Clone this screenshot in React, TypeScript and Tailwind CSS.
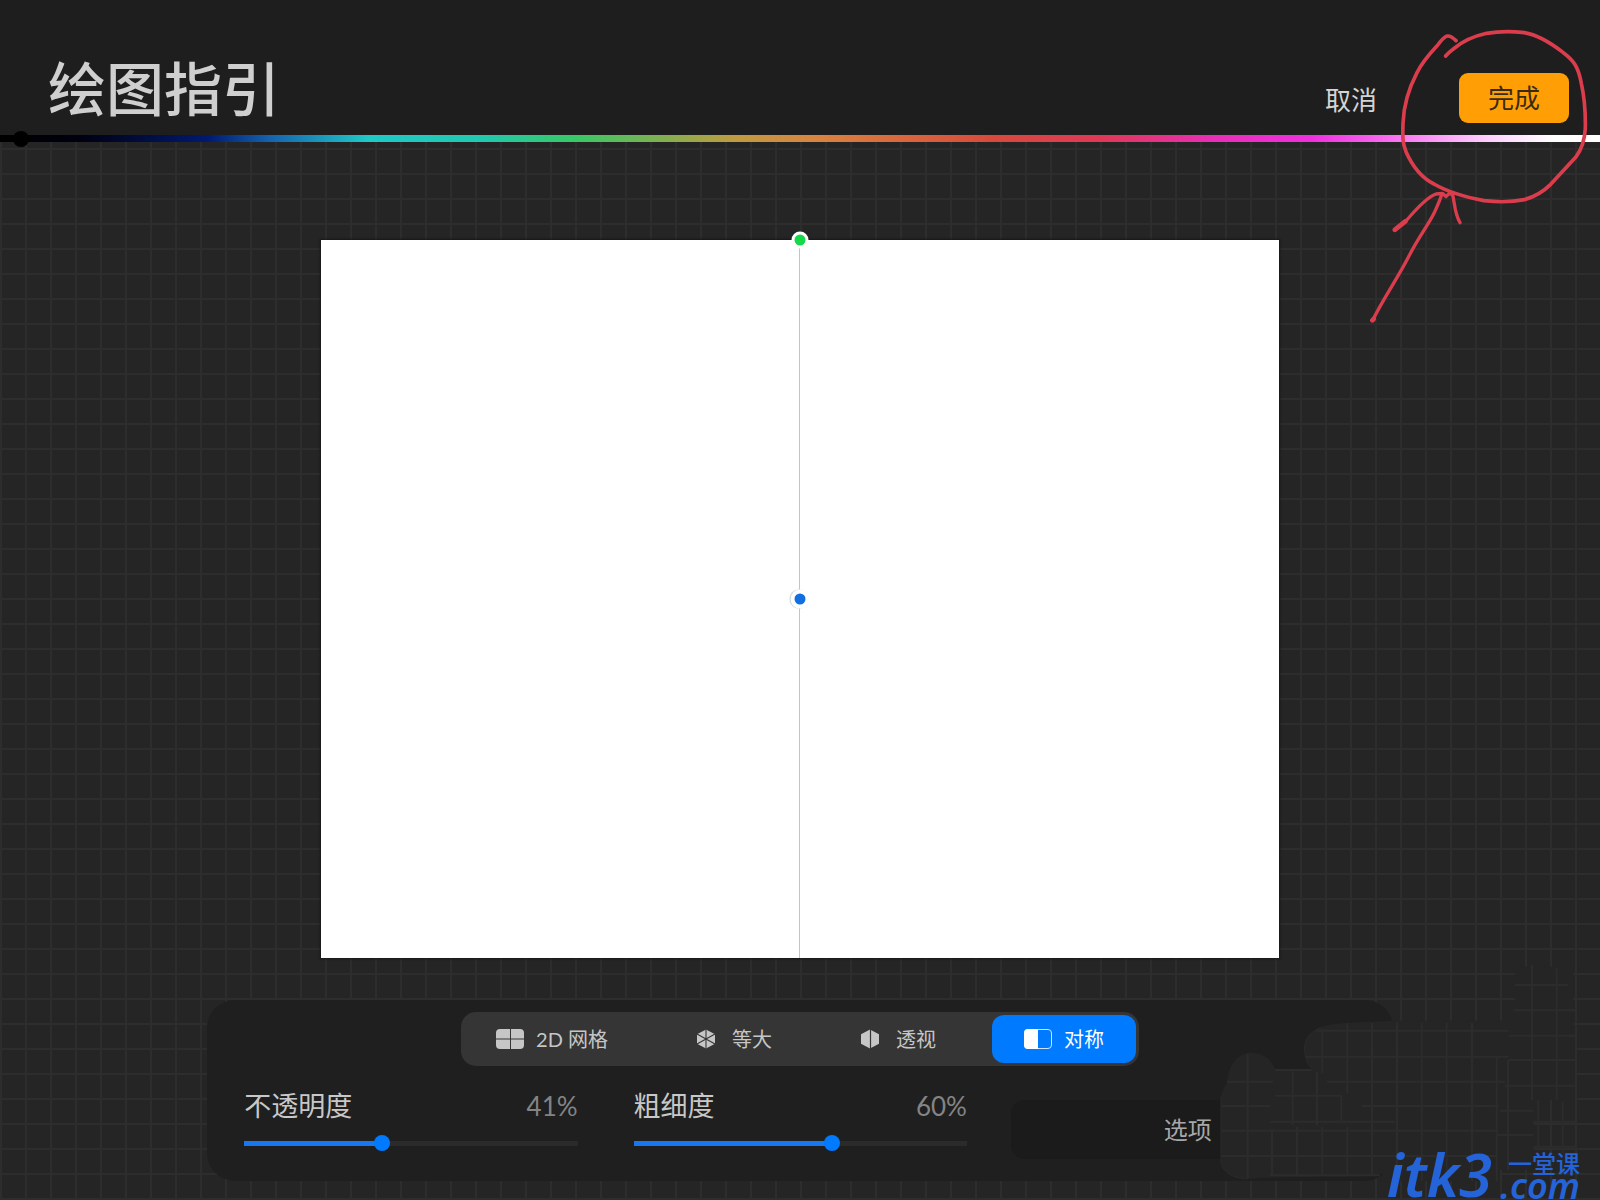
import { useState, type ReactNode } from "react";

function GridIcon() {
  return (
    <svg viewBox="0 0 28 20" className="h-5 w-7" aria-hidden="true">
      <rect x="0" y="0" width="28" height="20" rx="4" fill="#c6c6c6" />
      <path d="M14.5 0V20M0 10H28" stroke="#353535" strokeWidth="1" />
    </svg>
  );
}

function IsometricIcon() {
  return (
    <svg viewBox="0 0 20 20" className="size-5" aria-hidden="true">
      <path d="M10 0.5L19 5.3V14.7L10 19.5L1 14.7V5.3Z" fill="#c6c6c6" strokeLinejoin="round" />
      <path d="M10 0V20M1 5L19 15M19 5L1 15" stroke="#353535" strokeWidth="1.1" />
    </svg>
  );
}

function PerspectiveIcon() {
  return (
    <svg viewBox="0 0 20 20" className="size-5" aria-hidden="true">
      <path d="M10 0.5L19 5.3V14.7L10 19.5L1 14.7V5.3Z" fill="#c6c6c6" />
      <path d="M10.5 0V20" stroke="#353535" strokeWidth="1.2" />
    </svg>
  );
}

function SymmetryIcon() {
  return (
    <svg viewBox="0 0 28 20" className="h-5 w-7" aria-hidden="true">
      <rect x="0.5" y="0.5" width="27" height="19" rx="3.5" fill="none" stroke="#cfe4ff" strokeWidth="1" />
      <path d="M4 0H14V20H4A4 4 0 0 1 0 16V4A4 4 0 0 1 4 0Z" fill="#ffffff" />
    </svg>
  );
}

const tabs: { id: string; label: string; icon: ReactNode; gap: string }[] = [
  { id: "grid", label: "2D 网格", icon: <GridIcon />, gap: "gap-3" },
  { id: "iso", label: "等大", icon: <IsometricIcon />, gap: "gap-4" },
  { id: "persp", label: "透视", icon: <PerspectiveIcon />, gap: "gap-4" },
  { id: "sym", label: "对称", icon: <SymmetryIcon />, gap: "gap-3" },
];

function Slider({ id, label, initial }: { id: string; label: string; initial: number }) {
  const [value, setValue] = useState(initial);
  return (
    <div className="min-w-0">
      <div className="flex items-center justify-between leading-10">
        <label htmlFor={id} className="text-[27px] text-[#c8c8c8]">{label}</label>
        <output htmlFor={id} className="text-[26px] text-[#848484]">{value}%</output>
      </div>
      <input
        id={id}
        type="range"
        min={0}
        max={100}
        value={value}
        onChange={(e) => setValue(Number(e.target.value))}
        style={{ backgroundImage: `linear-gradient(to right, #1677ee ${value}%, #2b2b2b ${value}%)` }}
        className="mt-[9px] block h-4 w-full appearance-none rounded-sm bg-[length:100%_5px] bg-center bg-no-repeat [&::-webkit-slider-thumb]:size-4 [&::-webkit-slider-thumb]:appearance-none [&::-webkit-slider-thumb]:rounded-full [&::-webkit-slider-thumb]:bg-[#007aff]"
      />
    </div>
  );
}

function BrushedArea() {
  return (
    <svg viewBox="0 0 1260 780" className="pointer-events-none absolute right-0 bottom-0 h-[260px] w-[420px]" aria-hidden="true">
      <path
        d="M645 242C560 246 450 246 410 265C380 285 370 305 374 335C378 365 388 380 398 387H285C275 357 250 338 212 338C170 340 145 375 142 430C125 448 122 470 122 500V670C132 700 160 717 205 717C330 706 480 714 560 708C585 706 600 700 610 702L600 724H960V690H1060V480H1185V270H1180V80H1005V242Z"
        fill="#252525"
      />
      <g stroke="#2c2c2c" strokeWidth="6" fill="none">
        <path d="M410 272H985M376 350H985M440 425H975M545 498H955M125 572H950M125 648H950M270 706H600" />
        <path d="M140 425H280M125 498H270M285 390H395M285 467H480M270 545H645" />
        <path d="M203 342V714M276 570V708M338 390V555M411 395V555M484 465V545M427 268V400M427 560V705M351 560V705M502 250V460M502 560V705M576 248V705M651 248V724M725 248V724M800 248V724M876 248V724M950 350V724" />
        <path d="M1005 135H1165M1000 211H1185M985 287H1185M985 360H1185M975 437H1185M960 512H1060M950 585H1060M1060 545H1190M1060 620H1190" />
        <path d="M1056 75V480M1130 85V480M984 360V690M1075 480V620M1148 485V640" />
      </g>
      <path d="M205 717C160 715 132 700 123 670V470M398 387C388 380 378 365 374 335C370 305 385 280 420 265" stroke="#2a2a2a" strokeWidth="3" fill="none" />
    </svg>
  );
}

function RedMarkup() {
  return (
    <svg viewBox="0 0 960 1020" className="pointer-events-none absolute top-0 right-0 z-20 h-[340px] w-[320px]" aria-hidden="true">
      <g fill="none" stroke="#db3d4d" strokeLinecap="round" strokeLinejoin="round">
        <path strokeWidth="11" d="M528 122C518 112 510 107 502 108C490 111 484 122 474 134C445 165 425 188 411 218C385 268 371 312 369 370C368 410 367 428 378 455C400 505 425 533 462 552C510 580 560 592 612 602C655 607 695 607 733 599C765 590 790 575 812 553L887 472C906 447 914 420 916 385C917 330 914 295 904 250C895 200 880 180 850 158C810 127 770 104 733 98C690 93 655 94 620 100C575 110 540 130 520 147C508 156 502 162 497 168" />
        <path strokeWidth="10" d="M278 961C310 895 350 840 385 772C415 712 445 675 462 640C472 618 480 600 485 584M343 691L378 663C410 625 445 590 468 582L488 580L498 590L508 580L518 584C524 610 524 642 540 668" />
        <path strokeWidth="14" d="M345 689L376 664M277 961L281 957" />
      </g>
    </svg>
  );
}

export default function App() {
  const [active, setActive] = useState("sym");
  const [hue, setHue] = useState(8);

  return (
    <div className="relative flex min-h-screen flex-col overflow-hidden bg-[#252525] font-['Lato','Noto_Sans_CJK_SC',sans-serif]">
      <header className="flex h-[135px] items-end justify-between bg-[#1e1e1e] pr-[31px] pb-3 pl-12">
        <h1 className="text-[58px] leading-[68px] font-medium text-[#cfcfcf]">绘图指引</h1>
        <div className="flex items-end gap-14 text-[26px]">
          <button type="button" className="h-[46px] px-[26px] leading-[46px] text-[#d4d4d4]">取消</button>
          <button type="button" className="h-[50px] w-[110px] rounded-[9px] bg-[#ff9f05] leading-[50px] text-[#3a2a12]">完成</button>
        </div>
      </header>

      <input
        type="range"
        aria-label="颜色"
        min={0}
        max={1000}
        value={hue}
        onChange={(e) => setHue(Number(e.target.value))}
        className="relative z-10 block h-[7px] w-full appearance-none bg-[linear-gradient(to_right,#000_0%,#000010_5%,#001a70_13%,#1565b0_17%,#20c8c8_23%,#22c8b0_30%,#38c865_36%,#c09a40_46%,#d88440_51%,#d84a3c_62%,#e03858_69%,#e82fb8_76%,#f030e0_82%,#f870f0_87%,#ffd0ff_93%,#fff_97%)] [&::-webkit-slider-thumb]:size-4 [&::-webkit-slider-thumb]:appearance-none [&::-webkit-slider-thumb]:rounded-full [&::-webkit-slider-thumb]:bg-black"
      />

      <main className="flex flex-1 flex-col items-center bg-[linear-gradient(to_right,#2d2d2d_2px,transparent_2px),linear-gradient(to_bottom,#2d2d2d_2px,transparent_2px)] bg-[size:25px_25px] bg-[position:0px_6px] pt-[98px] pb-[19px]">
        <section aria-label="画布" className="relative flex aspect-[958/718] w-[59.9%] justify-center bg-white shadow-[0_0_2px_1px_#161616]">
          <div className="w-px bg-[#c4c4c4]" />
          <button type="button" aria-label="旋转" className="absolute top-0 left-1/2 size-[17px] -translate-x-1/2 -translate-y-1/2 rounded-full border-[3px] border-white bg-[#16d84a]" />
          <button type="button" aria-label="移动" className="absolute top-1/2 left-1/2 size-[19px] -translate-x-1/2 -translate-y-1/2 rounded-full border-4 border-white bg-[#126fe0] shadow-[-1px_0_1px_#c8d0d0]" />
        </section>

        <section className="mt-[42px] flex w-[74.1%] flex-col items-center rounded-[28px] bg-[#1f1f1f] pt-3 pb-[22px]">
          <div role="tablist" className="flex h-[54px] gap-6 rounded-[15px] bg-[#353535] p-[3px] text-xl">
            {tabs.map((t) => (
              <button
                key={t.id}
                type="button"
                role="tab"
                aria-selected={active === t.id}
                onClick={() => setActive(t.id)}
                className={`flex items-center rounded-xl px-8 ${t.gap} ${active === t.id ? "bg-[#007aff] text-white" : "text-[#c6c6c6]"}`}
              >
                {t.icon}
                <span>{t.label}</span>
              </button>
            ))}
          </div>
          <div className="mt-5 flex w-full gap-11 pr-7 pl-[37px]">
            <div className="grid flex-[723] grid-cols-2 gap-14">
              <Slider id="opacity" label="不透明度" initial={41} />
              <Slider id="thickness" label="粗细度" initial={60} />
            </div>
            <button type="button" className="mt-[14px] h-[59px] flex-[354] rounded-[14px] bg-[#1b1b1b] text-2xl text-[#a8a8a8]">选项</button>
          </div>
        </section>
      </main>

      <BrushedArea />
      <RedMarkup />

      <div className="absolute right-5 bottom-0 flex items-end gap-2 font-['Noto_Sans','Noto_Sans_CJK_SC',sans-serif] font-semibold text-[#2563d8]">
        <span className="text-[60px] leading-[52px] italic">itk3</span>
        <span className="flex flex-col items-end">
          <span className="text-2xl leading-4 font-medium">一堂课</span>
          <span className="text-[36px] leading-7 italic">.com</span>
        </span>
      </div>
    </div>
  );
}
